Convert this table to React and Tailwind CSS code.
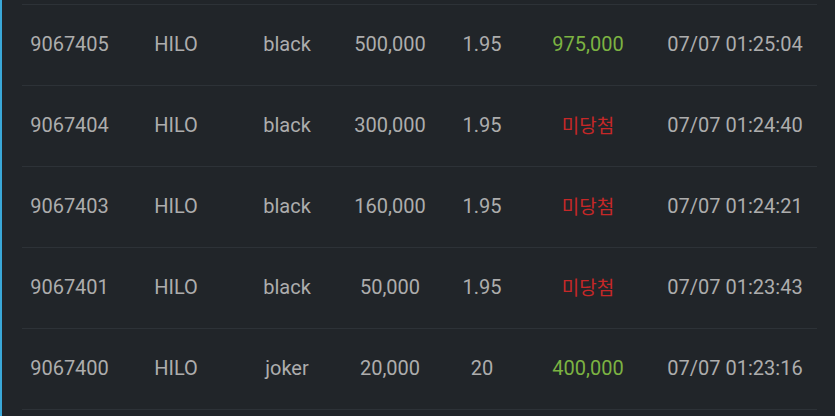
const rows = [
  { id: "9067405", game: "HILO", pick: "black", bet: "500,000", odds: "1.95", result: "975,000", win: true, time: "07/07 01:25:04" },
  { id: "9067404", game: "HILO", pick: "black", bet: "300,000", odds: "1.95", result: "미당첨", win: false, time: "07/07 01:24:40" },
  { id: "9067403", game: "HILO", pick: "black", bet: "160,000", odds: "1.95", result: "미당첨", win: false, time: "07/07 01:24:21" },
  { id: "9067401", game: "HILO", pick: "black", bet: "50,000", odds: "1.95", result: "미당첨", win: false, time: "07/07 01:23:43" },
  { id: "9067400", game: "HILO", pick: "joker", bet: "20,000", odds: "20", result: "400,000", win: true, time: "07/07 01:23:16" },
];

const cols = "grid grid-cols-[95px_118px_104px_102px_82px_130px_164px]";

export default function App() {
  return (
    <div className="w-[835px] h-[416px] overflow-hidden bg-[#212529] border-l-2 border-[#3aa8d8] font-['Roboto','Noto_Sans_CJK_KR',sans-serif]">
      <div className="pt-[4px] pl-[20px] w-[815px]">
        {rows.map((r) => (
          <div key={r.id} className={`${cols} h-[81px] pb-[2px] items-center border-t border-[#2d3237] text-[20px] text-[#adadad] text-center`}>
            <span>{r.id}</span>
            <span>{r.game}</span>
            <span>{r.pick}</span>
            <span>{r.bet}</span>
            <span>{r.odds}</span>
            <span className={r.win ? "text-[#7cb342]" : "text-[#c62828] font-['Noto_Sans_CJK_KR',sans-serif] text-[19px]"}>{r.result}</span>
            <span>{r.time}</span>
          </div>
        ))}
        <div className="border-t border-[#2d3237] h-[10px]" />
      </div>
    </div>
  );
}
